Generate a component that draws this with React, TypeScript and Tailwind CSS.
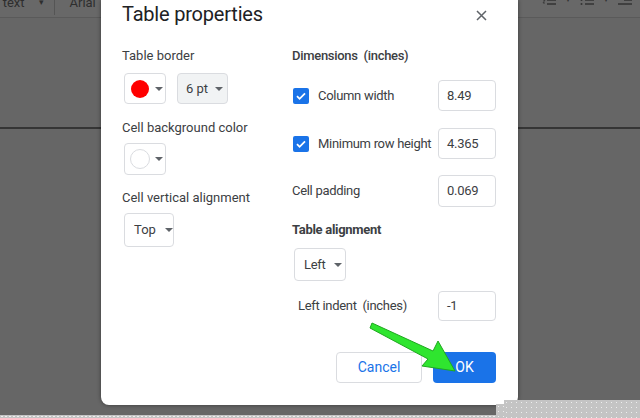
import React from "react";

const Caret = () => (
  <span className="inline-block w-0 h-0 border-l-[4px] border-r-[4px] border-t-[4px] border-l-transparent border-r-transparent border-t-[#5f6368]" />
);

const Check = () => (
  <span className="w-[16px] h-[16px] rounded-[2px] bg-[#1a73e8] flex items-center justify-center shrink-0">
    <svg width="12" height="12" viewBox="0 0 12 12">
      <path d="M2 6.2l2.6 2.6L10 3.4" fill="none" stroke="#fff" strokeWidth="1.8" />
    </svg>
  </span>
);

const Input = ({ v, h = "h-[31px]" }: { v: string; h?: string }) => (
  <div className={`w-[58px] ${h} border border-[#dadce0] rounded-[4px] flex items-center pl-[8px] text-[13px] text-[#3c4043]`}>
    {v}
  </div>
);

export default function App() {
  return (
    <div
      className="relative w-[640px] h-[418px] overflow-hidden bg-[#666666]"
      style={{ fontFamily: "Roboto, 'Noto Sans', sans-serif" }}
    >
      {/* background toolbar */}
      <div className="h-[18px] border-b border-[#5a5a5a] bg-[#686868] flex items-start overflow-hidden text-[13px] text-[#2e2e2e]">
        <div className="-mt-[9px] flex items-center">
          <span className="-ml-[18px]">nal text</span>
          <span className="ml-[14px] text-[9px]">▾</span>
          <span className="ml-[10px] w-px h-[24px] bg-[#555]" />
          <span className="ml-[15px]">Arial</span>
        </div>
        <div className="ml-auto -mt-[6px] flex items-center gap-[10px] pr-[8px] text-[#333]">
          <svg width="14" height="12" viewBox="0 0 14 12"><path d="M5 2h9M5 6h9M5 10h9" stroke="#333" strokeWidth="1.3"/><path d="M1 1h1.5v3M1 6h2l-2 3h2" stroke="#333" strokeWidth="0.8" fill="none"/></svg>
          <span className="text-[8px]">▾</span>
          <svg width="14" height="12" viewBox="0 0 14 12"><path d="M5 2h9M5 6h9M5 10h9" stroke="#333" strokeWidth="1.3"/><circle cx="1.5" cy="2" r="1" fill="#333"/><circle cx="1.5" cy="6" r="1" fill="#333"/><circle cx="1.5" cy="10" r="1" fill="#333"/></svg>
          <span className="text-[8px]">▾</span>
          <svg width="14" height="12" viewBox="0 0 14 12"><path d="M4 2h10M6 6h8M0 10h14" stroke="#333" strokeWidth="1.3"/></svg>
        </div>
      </div>
      <div className="mt-[109px] h-[2px] bg-[#353535]" />

      {/* dialog */}
      <div className="absolute left-[101px] top-0 w-[417px] h-[405px] bg-white rounded-b-[8px] shadow-[0_0_4px_rgba(0,0,0,0.45)] pl-[21px] pr-[22px] text-[#3c4043]">
        <div className="pt-[2px] h-[26px] flex items-center justify-between">
          <span className="text-[20px] leading-[24px] tracking-[-0.2px] text-[#202124]">Table properties</span>
          <svg width="11" height="11" viewBox="0 0 11 11" className="mr-[9px] mt-[2px]">
            <path d="M1 1l9 9M10 1l-9 9" stroke="#5f6368" strokeWidth="1.5" />
          </svg>
        </div>

        <div className="mt-[22px] flex">
          {/* left column */}
          <div className="w-[170px] flex flex-col items-start text-[13px]">
            <div className="leading-[16px]">Table border</div>
            <div className="mt-[9px] ml-[2px] flex gap-[11px]">
              <div className="w-[42px] h-[31px] border border-[#dadce0] rounded-[4px] flex items-center pl-[6px] gap-[6px]">
                <span className="w-[18px] h-[18px] rounded-full bg-[#ff0000]" />
                <Caret />
              </div>
              <div className="w-[51px] h-[31px] border border-[#dadce0] bg-[#f1f3f4] rounded-[4px] flex items-center pl-[8px] gap-[7px]">
                <span>6 pt</span>
                <Caret />
              </div>
            </div>
            <div className="mt-[16px] leading-[16px]">Cell background color</div>
            <div className="mt-[7px] ml-[2px] w-[42px] h-[32px] border border-[#dadce0] rounded-[4px] flex items-center pl-[5px] gap-[5px]">
              <span className="w-[20px] h-[20px] rounded-full border border-[#dadce0] bg-white" />
              <Caret />
            </div>
            <div className="mt-[15px] leading-[16px]">Cell vertical alignment</div>
            <div className="mt-[7px] ml-[2px] w-[50px] h-[34px] border border-[#dadce0] rounded-[4px] flex items-center pl-[9px] gap-[9px]">
              <span>Top</span>
              <Caret />
            </div>
          </div>

          {/* right column */}
          <div className="w-[204px] flex flex-col text-[13px] tracking-[-0.3px]">
            <div className="leading-[16px] font-medium">Dimensions&nbsp; (inches)</div>
            <div className="mt-[16px] flex items-center justify-between">
              <div className="flex items-center gap-[9px] ml-[1px]">
                <Check />
                <span>Column width</span>
              </div>
              <Input v="8.49" />
            </div>
            <div className="mt-[17px] flex items-center justify-between">
              <div className="flex items-center gap-[9px] ml-[1px]">
                <Check />
                <span>Minimum row height</span>
              </div>
              <Input v="4.365" />
            </div>
            <div className="mt-[16px] flex items-center justify-between">
              <span>Cell padding</span>
              <Input v="0.069" h="h-[32px]" />
            </div>
            <div className="mt-[15px] leading-[16px] font-bold">Table alignment</div>
            <div className="mt-[10px] ml-[2px] w-[52px] h-[33px] border border-[#dadce0] rounded-[4px] flex items-center pl-[9px] gap-[9px]">
              <span>Left</span>
              <Caret />
            </div>
            <div className="mt-[10px] flex items-center justify-between">
              <span className="ml-[6px]">Left indent&nbsp; (inches)</span>
              <Input v="-1" h="h-[30px]" />
            </div>
            <div className="mt-[31px] flex justify-end gap-[11px] tracking-normal">
              <div className="w-[86px] h-[31px] border border-[#dadce0] rounded-[4px] flex items-center justify-center text-[14px] text-[#1a73e8]">
                Cancel
              </div>
              <div className="w-[63px] h-[31px] rounded-[4px] bg-[#1a73e8] flex items-center justify-center text-[14px] text-white">
                OK
              </div>
            </div>
          </div>
        </div>
      </div>

      {/* dotted bottom artifacts */}
      <div className="absolute left-0 bottom-0 w-[640px] h-[3px] bg-[#c4c4c4] bg-[image:radial-gradient(#eeeeee_0.8px,transparent_0.8px)] bg-[length:4px_3px]" />
      <div className="absolute left-[504px] top-[400px] w-[136px] h-[18px] bg-[#c4c4c4] bg-[image:radial-gradient(#eeeeee_0.8px,transparent_0.8px)] bg-[length:5px_5px]" />
      <div className="absolute left-[496px] top-[404px] w-[10px] h-[14px] bg-[#c4c4c4] bg-[image:radial-gradient(#eeeeee_0.8px,transparent_0.8px)] bg-[length:5px_5px]" />

      {/* green arrow */}
      <svg className="absolute left-0 top-0 pointer-events-none" width="640" height="418" viewBox="0 0 640 418">
        <polygon
          points="372,323 433,351 438,341 455,371 422,366 428,359 370,328"
          fill="#2fe52f"
          stroke="#1fa81f"
          strokeWidth="1"
          strokeLinejoin="round"
        />
      </svg>
    </div>
  );
}
